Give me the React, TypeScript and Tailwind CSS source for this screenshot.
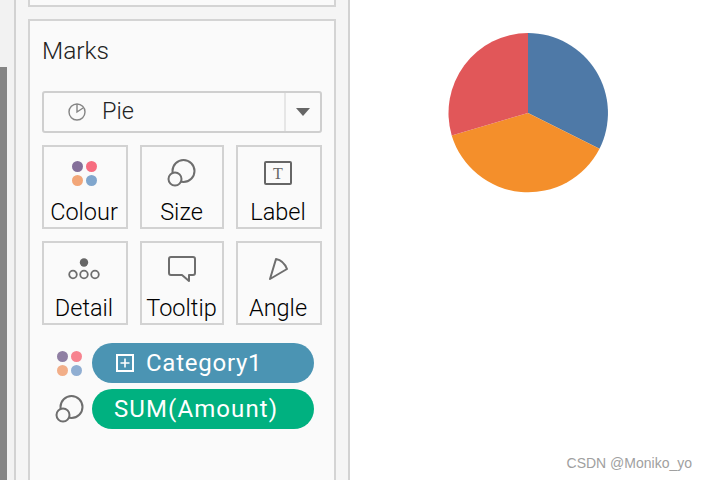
const font = "font-['Roboto','Liberation_Sans',sans-serif]";

function Dots({ muted = false }: { muted?: boolean }) {
  const colors = muted
    ? ["#8f7fa3", "#f7838f", "#f2ae88", "#90aed2"]
    : ["#85709a", "#f76d80", "#f2a678", "#80a6cd"];
  return (
    <svg width="26" height="26" viewBox="0 0 26 26">
      <circle cx="6.5" cy="6.5" r="5.5" fill={colors[0]} />
      <circle cx="20.5" cy="6.5" r="5.5" fill={colors[1]} />
      <circle cx="6.5" cy="20.5" r="5.5" fill={colors[2]} />
      <circle cx="20.5" cy="20.5" r="5.5" fill={colors[3]} />
    </svg>
  );
}

function SizeIcon() {
  return (
    <svg width="29" height="28" viewBox="0 0 29 28" fill="none" stroke="#6e6e6e" strokeWidth="2">
      <circle cx="16.5" cy="12" r="11" fill="none" />
      <circle cx="8" cy="20" r="6.5" fill="#fafafa" />
    </svg>
  );
}

function LabelIcon() {
  return (
    <svg width="28" height="24" viewBox="0 0 28 24" fill="none">
      <rect x="1" y="1" width="26" height="22" rx="1" stroke="#666" strokeWidth="2" />
      <text x="14" y="18" textAnchor="middle" fontSize="16" fontFamily="'Liberation Serif', serif" fill="#666">T</text>
    </svg>
  );
}

function DetailIcon() {
  return (
    <svg width="32" height="22" viewBox="0 0 32 22" fill="none" stroke="#6e6e6e" strokeWidth="1.8">
      <circle cx="16" cy="4.5" r="4.2" fill="#666" stroke="none" />
      <circle cx="5" cy="16.5" r="3.8" />
      <circle cx="16" cy="16.5" r="3.8" />
      <circle cx="27" cy="16.5" r="3.8" />
    </svg>
  );
}

function TooltipIcon() {
  return (
    <svg width="28" height="27" viewBox="0 0 28 27" fill="none" stroke="#6e6e6e" strokeWidth="2" strokeLinejoin="round">
      <path d="M3 1h22a2 2 0 0 1 2 2v14a2 2 0 0 1-2 2h-4v6l-7-6H3a2 2 0 0 1-2-2V3a2 2 0 0 1 2-2z" />
    </svg>
  );
}

function AngleIcon() {
  return (
    <svg width="20" height="24" viewBox="0 0 20 24" fill="none" stroke="#6e6e6e" strokeWidth="2" strokeLinejoin="round">
      <path d="M2 22L8 2c5 1 9 5 11 10z" />
    </svg>
  );
}

function PieIcon() {
  return (
    <svg width="18" height="18" viewBox="0 0 18 18" fill="none" stroke="#858585" strokeWidth="1.4">
      <circle cx="9" cy="9" r="8" />
      <path d="M9 1v8l6-4" />
    </svg>
  );
}

function MarkButton({ label, icon, wide }: { label: string; icon: React.ReactNode; wide: boolean }) {
  return (
    <div className={`${wide ? "w-[86px]" : "w-[84px]"} h-[84px] border-2 border-[#d2d2d2] flex flex-col items-center`}>
      <div className={`h-[40px] mt-[6px] flex items-center justify-center ${wide ? "mr-[3px]" : "mr-[1px]"}`}>{icon}</div>
      <div className={`text-[23.5px] leading-[28px] font-light text-black mt-[5px] ${wide ? "mr-[2px]" : "mr-[1px]"}`}>{label}</div>
    </div>
  );
}

function Pie() {
  return (
    <svg width="160" height="160" viewBox="0 0 160 160">
      <path d="M80 80V0A80 80 0 0 1 151.5 115.8z" fill="#4e79a7" />
      <path d="M80 80L151.5 115.8A80 80 0 0 1 3.7 102.4z" fill="#f48f2b" />
      <path d="M80 80L3.7 102.4A80 80 0 0 1 80 0z" fill="#e15759" />
    </svg>
  );
}

export default function App() {
  return (
    <div className={`${font} w-[707px] h-[480px] overflow-hidden flex bg-white`}>
      <div className="w-[14px] h-full bg-[#f2f2f2] flex flex-col">
        <div className="h-[67px] shrink-0" />
        <div className="w-[7px] flex-1 bg-[#858585]" />
      </div>
      <div className="w-[336px] h-full bg-[#f5f5f5] border-x-2 border-[#d2d2d2] px-[12px]">
        <div className="h-[7px] border-2 border-t-0 border-[#d4d4d4] bg-[#fafafa]" />
        <div className="mt-[12px] h-[470px] border-2 border-[#d4d4d4] bg-[#fafafa] px-[12px] relative">
          <div className="mt-[14px] text-[24.5px] leading-[32px] font-light text-[#222]">Marks</div>
          <div className="mt-[24px] w-[280px] h-[42px] border-2 border-[#cfcfcf] rounded-[3px] flex items-center">
            <div className="flex-1 flex items-center h-full pl-[24px]">
              <PieIcon />
              <span className="ml-[16px] text-[23.5px] font-light text-[#222]">Pie</span>
            </div>
            <div className="w-[36px] h-full border-l-2 border-[#e6e6e6] flex items-center justify-center">
              <svg width="14" height="8" viewBox="0 0 14 8"><path d="M0 0h14L7 8z" fill="#666" /></svg>
            </div>
          </div>
          <div className="mt-[12px] w-[280px] flex flex-wrap gap-x-[12px] gap-y-[12px]">
            <MarkButton wide label="Colour" icon={<Dots />} />
            <MarkButton wide={false} label="Size" icon={<SizeIcon />} />
            <MarkButton wide label="Label" icon={<LabelIcon />} />
            <MarkButton wide label="Detail" icon={<DetailIcon />} />
            <MarkButton wide={false} label="Tooltip" icon={<TooltipIcon />} />
            <MarkButton wide label="Angle" icon={<AngleIcon />} />
          </div>
          <div className="mt-[18px] flex items-center pl-[14px] gap-[10px]">
            <Dots muted />
            <div className="w-[222px] h-[40px] rounded-full bg-[#4b94b3] flex items-center pl-[24px] text-white">
              <svg width="18" height="18" viewBox="0 0 18 18" fill="none" stroke="#fff" strokeWidth="2">
                <rect x="1" y="1" width="16" height="16" />
                <path d="M9 4.5v9M4.5 9h9" strokeWidth="1.6" />
              </svg>
              <span className="ml-[12px] text-[24px] leading-[40px] tracking-[0.75px] mt-[-1px]">Category1</span>
            </div>
          </div>
          <div className="mt-[6px] flex items-center pl-[13px] gap-[8px]">
            <SizeIcon />
            <div className="w-[222px] h-[40px] rounded-full bg-[#00b180] flex items-center pl-[22px] text-white">
              <span className="text-[24px] leading-[40px] tracking-[1.1px] mt-[-1px]">SUM(Amount)</span>
            </div>
          </div>
        </div>
      </div>
      <div className="flex-1 relative">
        <div className="ml-[98px] mt-[33px]"><Pie /></div>
        <div className="absolute right-[15px] bottom-[9px] text-[14px] leading-[16px] text-[#a0a0a0] font-['Liberation_Sans',sans-serif]">CSDN @Moniko_yo</div>
      </div>
    </div>
  );
}
